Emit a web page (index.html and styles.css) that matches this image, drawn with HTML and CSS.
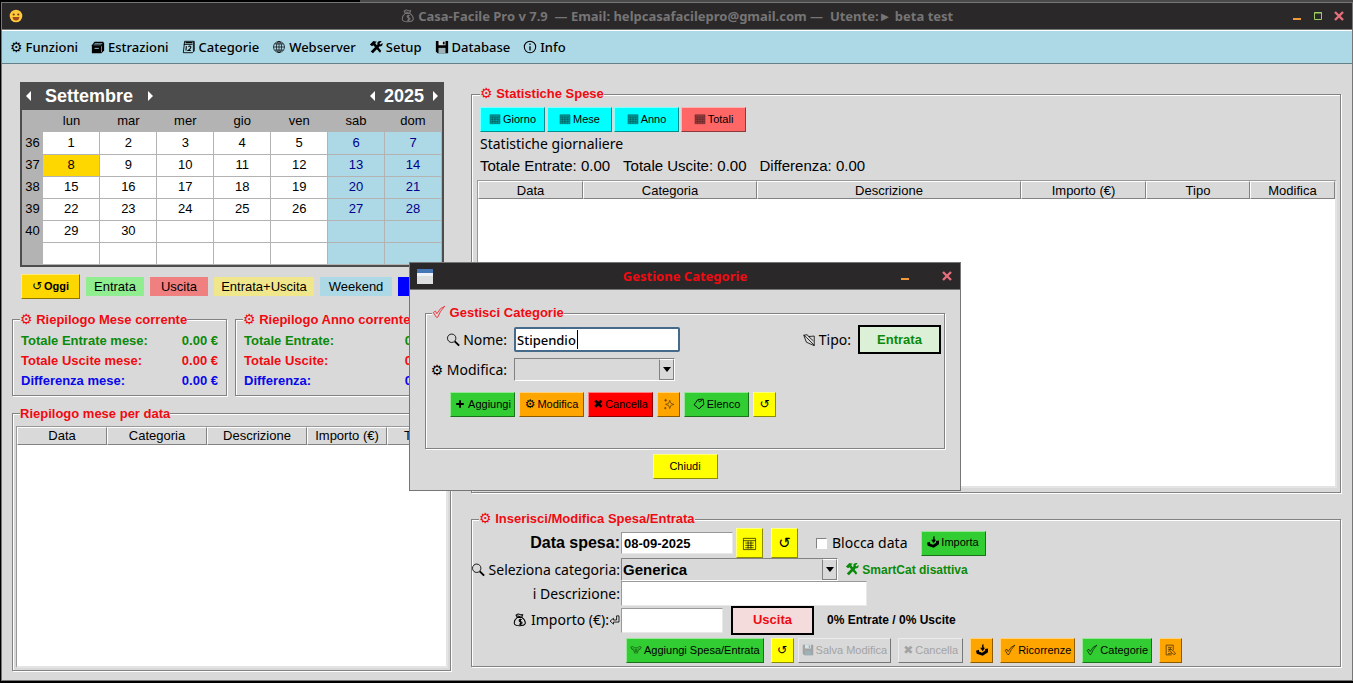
FILE: index.html
```html
<!DOCTYPE html>
<html lang="it">
<head>
<meta charset="utf-8">
<title>Casa-Facile Pro</title>
<link rel="stylesheet" href="styles.css">
</head>
<body>
<svg class="sprite" aria-hidden="true">
  <symbol id="cardbox" viewBox="0 0 16 16"><path d="M1 6l3-4h10l1 2v8l-3 3H1z" fill="currentColor"/><path d="M4 4h9M3 5.500h9M12 7v7" stroke="#add8e6" stroke-width=".7"/><path d="M4 9h5v1H4z" fill="#add8e6"/></symbol>
  <symbol id="cal12" viewBox="0 0 16 16"><path d="M3 1.500h11v11l-2 2H1.500z M13 2v11M2 5h10" fill="none" stroke="currentColor"/><path d="M5 7L4.500 12M7.500 8q1.500-2 2.500-.5T7 12h3M4 3h8" fill="none" stroke="currentColor" stroke-width="1.200"/></symbol>
  <symbol id="globe" viewBox="0 0 16 16"><g fill="none" stroke="currentColor" stroke-width=".8"><circle cx="8" cy="8" r="6.300"/><ellipse cx="8" cy="8" rx="3" ry="6.300"/><path d="M8 1.700v12.600M1.700 8h12.600M3 4.500h10M3 11.500h10"/></g></symbol>
  <symbol id="tools" viewBox="0 0 16 16"><path d="M1 5l4-4 4 1-2 1.500 7 9-1.500 2L5 6 3.500 7z" fill="currentColor"/><path d="M11 1.500q3-.5 3.500 0L12 4l1 1 2.500-1.500q.5 4-3.500 4L4.500 15 2 13l7.500-7.500q-.5-3 1.500-4z" fill="currentColor"/></symbol>
  <symbol id="floppy" viewBox="0 0 16 16"><path d="M1 1h14v14H3l-2-2z" fill="currentColor"/><path d="M4 1h8v5H4z" fill="#d4e3e8"/><path d="M4 9h8v6H4z" fill="#9db2b8"/><path d="M9 2h2v3H9z" fill="currentColor"/></symbol>
  <symbol id="info" viewBox="0 0 16 16"><circle cx="8" cy="8" r="6.500" fill="none" stroke="currentColor" stroke-width="1.200"/><path d="M8 7v5M8 4v1.600" stroke="currentColor" stroke-width="1.500"/></symbol>
  <symbol id="bag" viewBox="0 0 16 16"><g fill="none" stroke="currentColor" stroke-width="1.200"><path d="M5 5q-4 3-3.500 7 .5 2.500 6 2.500T14 12q.5-4-4-7zM5 5L3.500 2.500Q6 .5 7.500 1.500T11 2L10 5M5 3l5 2"/><path d="M10 7.500q-3-.5-3 1t2 1.500 1 2-3 .5M8.500 6.500v7"/></g></symbol>
  <symbol id="grid" viewBox="0 0 16 16"><path d="M1 2h14v12.500H1z" fill="currentColor" opacity=".4"/><path d="M1.500 2.500h13v12h-13zM2 5.500h12M2 8.500h12M2 11.500h12M4.500 5v9M8 5v9M11.500 5v9" fill="none" stroke="currentColor" stroke-width=".8" opacity=".35"/></symbol>
  <symbol id="calendar" viewBox="0 0 16 16"><path d="M1.500 2.500h13v12h-13zM1.500 5h13M3.500 7.500h9M3.500 10h9M3.500 12.500h9M6.500 5.500v8M9.500 5.500v8" fill="none" stroke="currentColor" opacity=".7"/></symbol>
  <symbol id="check" viewBox="0 0 16 16"><path d="M1.500 8.500l2.500-1.500 1.500 3Q9 3 14.500 1.500 9 7 6.500 14H5z" fill="none" stroke="currentColor" opacity=".85"/></symbol>
  <symbol id="search" viewBox="0 0 16 16"><circle cx="6.500" cy="6" r="4.800" fill="none" stroke="currentColor"/><path d="M10 9.500l5 5" stroke="currentColor" stroke-width="2.200"/></symbol>
  <symbol id="folder" viewBox="0 0 16 16"><path d="M2 2.500L6 2l1.500 2L14 3.500v11L5 10.500zM2 2.500L5 5l9 9M7.500 4L13 9" fill="none" stroke="currentColor" stroke-width=".9"/></symbol>
  <symbol id="plus" viewBox="0 0 16 16"><path d="M8 3v10M3 8h10" stroke="currentColor" stroke-width="2.600"/></symbol>
  <symbol id="spark" viewBox="0 0 16 16"><path d="M9 3l1.500 4 4 1.500-4 1.500L9 14l-1.500-4-4-1.500 4-1.500zM3.500 1v4M1.500 3h4M3 12v3M1.500 13.500h3" fill="none" stroke="currentColor" stroke-width=".9" opacity=".65"/></symbol>
  <symbol id="clip" viewBox="0 0 16 16"><path d="M6.500 2l7-.5 1 7L8 14.500 1.500 9zM7 3.500l2 1.500 3-2M9 13l5-4" fill="none" stroke="currentColor" stroke-width="1.200"/></symbol>
  <symbol id="inbox" viewBox="0 0 16 16"><path d="M0 9l4-1.500V10l4 1.500L12 9V6.500l4-.5v5l-7 4.500L1 13z" fill="currentColor"/><path d="M10 0Q7 1 8.500 5H5.500L9 9.500 12 5H10.500Q9.500 2 10 0z" fill="currentColor"/></symbol>
  <symbol id="memo" viewBox="0 0 16 16"><path d="M11 8V1.500H1.500v13H9M4 4.500h5M4 7h4M4 9.500h2M7 6l7 6-1 2-3-1-4-5zM9 12l-5 1" fill="none" stroke="currentColor" opacity=".7"/></symbol>
  <symbol id="wings" viewBox="0 0 16 16"><path d="M1 4q3-2 5 1h4q3-3 5-1-1 4-4 4l-1 4H6L5 8Q2 8 1 4zM3 5l2 2M13 5l-2 2M7 7h2v3H7z" fill="none" stroke="currentColor" stroke-width=".9" opacity=".6"/></symbol>
  <symbol id="enter" viewBox="0 0 16 16"><path d="M11 2h3.500v9H6.500v3L1.500 9.500l5-4V8H11z" fill="none" stroke="currentColor" stroke-width="1.200"/></symbol>
  <symbol id="left" viewBox="0 0 10 10"><path d="M7 0v10L2 5z" fill="currentColor"/></symbol>
  <symbol id="right" viewBox="0 0 10 10"><path d="M3 0v10l5-5z" fill="currentColor"/></symbol>
  <symbol id="min" viewBox="0 0 12 12"><path d="M2 8h8v2H2z" fill="#f09a3c"/></symbol>
  <symbol id="max" viewBox="0 0 12 12"><path d="M2.500 2.500h7v7h-7zM2 3h8" fill="none" stroke="#9bd060"/></symbol>
  <symbol id="close" viewBox="0 0 12 12"><path d="M2 2l8 8M10 2l-8 8" stroke="#e86f7d" stroke-width="2.400"/></symbol>
</svg>

<div class="window">
  <header class="titlebar">
    <svg class="smile" viewBox="0 0 14 14"><circle cx="7" cy="7" r="6.300" fill="#ffc83d"/><circle cx="4.700" cy="5.500" r="1.100" fill="#6b3c12"/><circle cx="9.300" cy="5.500" r="1.100" fill="#6b3c12"/><path d="M3.500 8h7q-.5 3.500-3.500 3.500T3.500 8z" fill="#a04a18"/></svg>
    <h1 class="title"><svg class="icon"><use href="#bag"/></svg> Casa-Facile Pro v 7.9 &nbsp;— Email: helpcasafacilepro@gmail.com — &nbsp;Utente:► beta test</h1>
    <div class="controls">
      <button aria-label="Riduci"><svg><use href="#min"/></svg></button>
      <button aria-label="Ingrandisci"><svg><use href="#max"/></svg></button>
      <button aria-label="Chiudi finestra"><svg><use href="#close"/></svg></button>
    </div>
  </header>
  <nav class="menubar">
    <button><span class="glyph" aria-hidden="true">⚙</span>Funzioni</button>
    <button><svg class="icon"><use href="#cardbox"/></svg>Estrazioni</button>
    <button><svg class="icon"><use href="#cal12"/></svg>Categorie</button>
    <button><svg class="icon"><use href="#globe"/></svg>Webserver</button>
    <button><svg class="icon"><use href="#tools"/></svg>Setup</button>
    <button><svg class="icon"><use href="#floppy"/></svg>Database</button>
    <button><svg class="icon"><use href="#info"/></svg>Info</button>
  </nav>

  <main class="content">
    <section class="side">
      <div class="calendar">
        <div class="cal-head">
          <button aria-label="Mese precedente"><svg><use href="#left"/></svg></button>
          <strong>Settembre</strong>
          <button aria-label="Mese successivo"><svg><use href="#right"/></svg></button>
          <span class="spacer"></span>
          <button aria-label="Anno precedente"><svg><use href="#left"/></svg></button>
          <strong>2025</strong>
          <button aria-label="Anno successivo"><svg><use href="#right"/></svg></button>
        </div>
        <table class="days">
          <colgroup><col class="week"></colgroup>
          <thead><tr><th></th><th>lun</th><th>mar</th><th>mer</th><th>gio</th><th>ven</th><th>sab</th><th>dom</th></tr></thead>
          <tbody>
            <tr><th>36</th><td>1</td><td>2</td><td>3</td><td>4</td><td>5</td><td>6</td><td>7</td></tr>
            <tr><th>37</th><td class="today">8</td><td>9</td><td>10</td><td>11</td><td>12</td><td>13</td><td>14</td></tr>
            <tr><th>38</th><td>15</td><td>16</td><td>17</td><td>18</td><td>19</td><td>20</td><td>21</td></tr>
            <tr><th>39</th><td>22</td><td>23</td><td>24</td><td>25</td><td>26</td><td>27</td><td>28</td></tr>
            <tr><th>40</th><td>29</td><td>30</td><td></td><td></td><td></td><td></td><td></td></tr>
            <tr><th></th><td></td><td></td><td></td><td></td><td></td><td></td><td></td></tr>
          </tbody>
        </table>
      </div>

      <div class="keys">
        <button class="btn gold"><span class="glyph" aria-hidden="true">↺</span>Oggi</button>
        <span class="key income">Entrata</span>
        <span class="key expense">Uscita</span>
        <span class="key both">Entrata+Uscita</span>
        <span class="key weekend">Weekend</span>
        <span class="key chosen"></span>
      </div>

      <div class="summaries">
        <fieldset class="group">
          <legend><span class="glyph" aria-hidden="true">⚙</span> Riepilogo Mese corrente</legend>
          <dl class="totals">
            <div class="green"><dt>Totale Entrate mese:</dt><dd>0.00 €</dd></div>
            <div class="red"><dt>Totale Uscite mese:</dt><dd>0.00 €</dd></div>
            <div class="blue"><dt>Differenza mese:</dt><dd>0.00 €</dd></div>
          </dl>
        </fieldset>
        <fieldset class="group">
          <legend><span class="glyph" aria-hidden="true">⚙</span> Riepilogo Anno corrente</legend>
          <dl class="totals">
            <div class="green"><dt>Totale Entrate:</dt><dd>0.00 €</dd></div>
            <div class="red"><dt>Totale Uscite:</dt><dd>0.00 €</dd></div>
            <div class="blue"><dt>Differenza:</dt><dd>0.00 €</dd></div>
          </dl>
        </fieldset>
      </div>

      <fieldset class="group list-group">
        <legend>Riepilogo mese per data</legend>
        <div class="sheet">
          <table class="list month-list">
            <colgroup><col><col><col><col><col></colgroup>
            <thead><tr><th>Data</th><th>Categoria</th><th>Descrizione</th><th>Importo (€)</th><th>Tipo</th></tr></thead>
          </table>
        </div>
      </fieldset>
    </section>

    <section class="work">
      <fieldset class="group stats">
        <legend><span class="glyph" aria-hidden="true">⚙</span> Statistiche Spese</legend>
        <div class="ranges">
          <button class="btn wide cyan"><svg class="icon"><use href="#grid"/></svg>Giorno</button>
          <button class="btn wide cyan"><svg class="icon"><use href="#grid"/></svg>Mese</button>
          <button class="btn wide cyan"><svg class="icon"><use href="#grid"/></svg>Anno</button>
          <button class="btn wide coral"><svg class="icon"><use href="#grid"/></svg>Totali</button>
        </div>
        <p class="stats-name">Statistiche giornaliere</p>
        <p class="stats-sums"><span>Totale Entrate: 0.00</span><span>Totale Uscite: 0.00</span><span>Differenza: 0.00</span></p>
        <div class="sheet">
          <table class="list stats-list">
            <colgroup><col><col><col><col><col><col></colgroup>
            <thead><tr><th>Data</th><th>Categoria</th><th>Descrizione</th><th>Importo (€)</th><th>Tipo</th><th>Modifica</th></tr></thead>
          </table>
        </div>
      </fieldset>

      <fieldset class="group entry">
        <legend><span class="glyph" aria-hidden="true">⚙</span> Inserisci/Modifica Spesa/Entrata</legend>
        <div class="form">
          <label class="big" for="date">Data spesa:</label>
          <div class="line date-line">
            <input id="date" class="field date" value="08-09-2025">
            <button class="btn square yellow" aria-label="Calendario"><svg class="icon"><use href="#calendar"/></svg></button>
            <button class="btn square yellow" aria-label="Ripristina data"><span class="glyph" aria-hidden="true">↺</span></button>
            <label class="lock"><input type="checkbox" class="tick"> Blocca data</label>
            <button class="btn wide lime"><svg class="icon"><use href="#inbox"/></svg>Importa</button>
          </div>
          <label for="cat"><svg class="icon"><use href="#search"/></svg> Seleziona categoria:</label>
          <div class="line">
            <span class="combo cat"><select id="cat"><option>Generica</option></select></span>
            <span class="smart"><svg class="icon"><use href="#tools"/></svg> SmartCat disattiva</span>
          </div>
          <label for="desc">i Descrizione:</label>
          <div class="line"><input id="desc" class="field desc"></div>
          <label for="amount"><svg class="icon"><use href="#bag"/></svg> Importo (€):<svg class="icon enter"><use href="#enter"/></svg></label>
          <div class="line amount-line">
            <input id="amount" class="field amount">
            <button class="kind out">Uscita</button>
            <span class="share">0% Entrate / 0% Uscite</span>
          </div>
        </div>
        <div class="actions">
          <button class="btn lime"><svg class="icon"><use href="#wings"/></svg>Aggiungi Spesa/Entrata</button>
          <div class="pair">
            <button class="btn mini yellow" aria-label="Azzera"><span class="glyph" aria-hidden="true">↺</span></button>
            <button class="btn" disabled><svg class="icon"><use href="#floppy"/></svg>Salva Modifica</button>
          </div>
          <button class="btn wide" disabled><span class="glyph" aria-hidden="true">✖</span>Cancella</button>
          <button class="btn mini orange" aria-label="Scarica"><svg class="icon"><use href="#inbox"/></svg></button>
          <button class="btn orange"><svg class="icon"><use href="#check"/></svg>Ricorrenze</button>
          <button class="btn lime"><svg class="icon"><use href="#check"/></svg>Categorie</button>
          <button class="btn mini orange" aria-label="Note"><svg class="icon"><use href="#memo"/></svg></button>
        </div>
      </fieldset>
    </section>
  </main>
</div>

<div class="dialog" role="dialog" aria-labelledby="dialog-title">
  <header class="titlebar">
    <svg class="app" viewBox="0 0 16 15"><path d="M0 0h16v15H0z" fill="#dcdedf"/><path d="M0 0h16v4H0z" fill="#4577b5"/><path d="M0 4h16v3H0z" fill="#eef2f6"/></svg>
    <h2 id="dialog-title" class="title alert">Gestione Categorie</h2>
    <div class="controls">
      <button aria-label="Riduci"><svg><use href="#min"/></svg></button>
      <button aria-label="Chiudi dialogo"><svg><use href="#close"/></svg></button>
    </div>
  </header>
  <div class="dialog-body">
    <fieldset class="group">
      <legend><svg class="icon"><use href="#check"/></svg> Gestisci Categorie</legend>
      <div class="dialog-form">
        <label for="name"><svg class="icon"><use href="#search"/></svg> Nome:</label>
        <span class="name-box"><input id="name" value="Stipendio"><i class="caret"></i></span>
        <span class="type"><svg class="icon"><use href="#folder"/></svg> Tipo: <button class="kind in">Entrata</button></span>
        <label for="edit"><span class="glyph" aria-hidden="true">⚙</span> Modifica:</label>
        <span class="combo edit"><select id="edit"><option></option></select></span>
      </div>
      <div class="dialog-actions">
        <button class="btn wide lime"><svg class="icon"><use href="#plus"/></svg>Aggiungi</button>
        <button class="btn wide orange"><span class="glyph" aria-hidden="true">⚙</span>Modifica</button>
        <button class="btn wide pure"><span class="glyph" aria-hidden="true">✖</span>Cancella</button>
        <button class="btn mini orange" aria-label="Pulisci"><svg class="icon"><use href="#spark"/></svg></button>
        <button class="btn wide lime"><svg class="icon"><use href="#clip"/></svg>Elenco</button>
        <button class="btn mini yellow" aria-label="Aggiorna"><span class="glyph" aria-hidden="true">↺</span></button>
      </div>
    </fieldset>
    <button class="btn wide yellow">Chiudi</button>
  </div>
</div>
</body>
</html>
```
FILE: styles.css
```css
* { box-sizing: border-box; }

body {
  margin: 0;
  height: 100vh;
  padding: 2px 0 2px 1px;
  background: linear-gradient(90deg, #000 360px, #4a4a4a 360px) top / 100% 2px no-repeat, #000;
  font: 13px/18px "Liberation Sans", Arial, sans-serif;
  color: #000;
  overflow: hidden;
}

button, input, select { font: inherit; color: inherit; margin: 0; }
button { padding: 0; border: 0; background: none; white-space: nowrap; }
h1, h2, p, dl, dd { margin: 0; }
.sprite { position: absolute; width: 0; height: 0; }
.icon { width: 14px; height: 14px; flex: none; vertical-align: -2px; }
.glyph { font: 14px/14px "DejaVu Sans", sans-serif; }
.spacer { flex: 1; }

.window {
  height: 100%;
  display: flex;
  flex-direction: column;
  border: 1px solid #767676;
  background: #d9d9d9;
}

.titlebar {
  height: 27px;
  flex: none;
  display: grid;
  grid-template-columns: 1fr auto 1fr;
  align-items: center;
  padding: 0 7px;
  background: #2a2829;
  border-bottom: 1px solid #767676;
}
.smile { width: 14px; height: 14px; }
.app { width: 16px; height: 15px; }
.title { font: bold 13px/20px "Noto Sans", sans-serif; color: #767575; white-space: nowrap; }
.alert { color: #f00a12; }
.controls { display: flex; gap: 9px; justify-self: end; }
.controls button, .controls svg { display: block; width: 12px; height: 12px; }
.dialog .controls { gap: 30px; }

.menubar {
  height: 34px;
  flex: none;
  display: flex;
  align-items: center;
  gap: 13px;
  padding: 0 8px;
  background: #add8e6;
  border-top: 1px solid #fff;
  border-bottom: 1px solid #647f88;
  font: 500 13px/18px "Noto Sans", sans-serif;
}
.menubar button { display: flex; align-items: center; gap: 3px; }

.content { flex: 1; min-height: 0; display: flex; gap: 20px; padding: 18px 11px 9px 10px; }
.side { width: 439px; flex: none; display: flex; flex-direction: column; }
.work { flex: 1; min-width: 0; display: flex; flex-direction: column; padding-top: 3px; padding-bottom: 4px; }

.calendar { margin: 0 7px 0 8px; border: 2px solid #4d4d4d; background: #b3b3b3; }
.cal-head { display: flex; align-items: center; height: 26px; padding: 0 2px 2px; background: #4d4d4d; color: #fff; font-size: 18px; }
.cal-head button, .cal-head svg { display: block; width: 10px; height: 10px; }
.cal-head strong { margin: 0 12px 0 11px; }
.cal-head strong:last-of-type { margin: 0 6px; }
.days { width: 100%; table-layout: fixed; border-collapse: collapse; text-align: center; }
.week { width: 21px; }
.days th, .days td { height: 22px; padding: 0; font-weight: normal; }
.days td { background: #fff; border: solid #b3b3b3; border-width: 0 1px 1px 0; }
.days td:nth-child(n+7) { background: #add8e6; color: #00008b; }
.days .today { background: gold; }

.keys { display: flex; align-items: center; gap: 6px; margin: 7px 0 0 9px; height: 26px; }
.key { height: 19px; padding: 1px 0; text-align: center; width: 58px; flex: none; }
.income { background: #90ee90; }
.expense { background: #f08080; }
.both { background: #f0e68c; width: 100px; }
.weekend { background: #add8e6; width: 72px; }
.chosen { background: #00f; width: 40px; }

.btn {
  height: 25px;
  flex: none;
  display: flex;
  align-items: center;
  justify-content: center;
  gap: 2px;
  padding: 0 3px 2px;
  font-size: 11px;
  line-height: 14px;
  background: #d9d9d9;
  border: 1px solid;
  border-color: rgba(255, 255, 255, .5) rgba(0, 0, 0, .45) rgba(0, 0, 0, .45) rgba(255, 255, 255, .5);
}
.btn .icon { width: 12px; height: 12px; }
.btn .glyph { font-size: 12px; }
.btn:disabled { color: #a3a3a3; }
.wide { width: 65px; padding: 0 0 2px; }
.mini { width: 23px; padding: 0 0 2px; }
.square { width: 27px; height: 30px; padding: 0; }
.square .icon { width: 15px; height: 15px; }
.square .glyph { font-size: 15px; }
.gold { background: gold; font-weight: bold; width: 59px; }
.cyan { background: cyan; }
.coral { background: #ff6666; }
.yellow { background: #ff0; }
.lime { background: #32cd32; }
.orange { background: orange; }
.pure { background: red; }

.group {
  min-width: 0;
  margin: 0;
  padding: 0 4px;
  border: 1px solid #828282;
  box-shadow: inset 1px 1px 0 #fff, 1px 1px 0 #fff;
}
.group > legend { margin-left: 3px; padding: 0; background: #d9d9d9; color: #f00a12; font-weight: bold; white-space: nowrap; }

.summaries { display: flex; gap: 8px; margin-top: 11px; }
.summaries .group { width: 215px; flex: none; padding: 2px 8px 4px 8px; }
.summaries .group > legend { margin-left: -1px; }
.totals { font-weight: bold; line-height: 20px; }
.totals div { display: flex; justify-content: space-between; }
.green { color: #0a8a0a; }
.red { color: #f00a12; }
.blue { color: #0808ea; }

.list-group { flex: 1; display: flex; flex-direction: column; margin-top: 9px; padding: 3px 2px 2px 3px; }
.list-group > legend { margin-left: 4px; }
.sheet { flex: 1; background: #fff; border: solid; border-width: 1px 2px 2px 1px; border-color: #999 #e4e4e4 #e4e4e4 #999; }
.list { width: 100%; table-layout: fixed; border-collapse: separate; border-spacing: 0; }
.list th { height: 18px; padding: 0; font-weight: normal; line-height: 15px; background: #d9d9d9; border: 1px solid; border-color: #fff #828282 #828282 #fff; }
.month-list col:nth-child(1) { width: 90px; }
.month-list col:nth-child(2), .month-list col:nth-child(3) { width: 100px; }
.month-list col:nth-child(4) { width: 80px; }

.stats { flex: 1; display: flex; flex-direction: column; padding: 4px 3px 4px 5px; }
.ranges { display: flex; gap: 2px; padding-left: 3px; }
.stats-name { padding-left: 3px; margin-top: 3px; font: 14px/18px "Noto Sans", sans-serif; }
.stats-sums { display: flex; gap: 13px; padding-left: 3px; margin: 4px 0 5px; font-size: 15px; line-height: 18px; }
.stats-list col:nth-child(1) { width: 105px; }
.stats-list col:nth-child(2) { width: 174px; }
.stats-list col:nth-child(4) { width: 125px; }
.stats-list col:nth-child(5) { width: 104px; }
.stats-list col:nth-child(6) { width: 85px; }

.entry { margin-top: 17px; padding: 0 2px 3px 2px; }
.entry > legend { margin-left: 5px; }
.form { display: grid; grid-template-columns: 146px 1fr; grid-template-rows: 30px 23px 25px 28px; column-gap: 1px; align-items: center; }
.form > label { justify-self: end; white-space: nowrap; font: 14px/18px "Noto Sans", sans-serif; }
.form > .big { font: bold 16px/20px "Liberation Sans", Arial, sans-serif; }
.form .enter { width: 11px; }
.line { display: flex; align-items: center; }
.field { height: 25px; padding: 0 2px; background: #fff; border: solid; border-width: 1px; border-color: #999 #e8e8e8 #e8e8e8 #999; outline: 0; }
.date { width: 112px; height: 22px; font-weight: bold; margin-right: 3px; }
.date-line .square { margin-right: 8px; }
.lock { display: flex; align-items: center; gap: 5px; margin: 0 13px 0 10px; font: 14px/18px "Noto Sans", sans-serif; }
.tick { appearance: none; width: 11px; height: 11px; background: #fff; border: 1px solid; border-color: #828282 #fff #fff #828282; }
.desc { width: 246px; }
.amount { width: 102px; margin-right: 8px; }
.share, .smart { font-weight: bold; font-size: 12px; }
.share { margin-left: 13px; }
.smart { margin-left: 7px; color: #0a8a0a; }

.combo { display: block; position: relative; height: 23px; border: 1px solid; border-color: #828282 #fff #fff #828282; }
.combo select { display: block; width: 100%; height: 100%; padding: 0 1px; border: 0; appearance: none; background: #d9d9d9; outline: 0; }
.combo::before { content: ""; position: absolute; right: 0; top: 0; bottom: 0; width: 13px; border: 1px solid; border-color: #fff #828282 #828282 #828282; pointer-events: none; }
.combo::after { content: ""; position: absolute; right: 3px; top: 8px; border: solid transparent; border-width: 5px 4px 0; border-top-color: #000; pointer-events: none; }
.cat { width: 217px; }
.cat select { font-weight: bold; font-size: 15px; }
.edit { width: 161px; }

.kind { width: 83px; height: 29px; border: 2px solid #000; font-weight: bold; }
.out { background: #f5dcdc; color: #f00a12; }
.in { background: #dcf0d8; color: #0a8a0a; }
.actions { display: flex; gap: 7px; margin: 4px 0 0 152px; }
.pair { display: flex; gap: 4px; }

.dialog {
  position: absolute;
  left: 409px;
  top: 262px;
  width: 552px;
  background: #d9d9d9;
  border: 1px solid #767676;
}
.dialog-body { display: flex; flex-direction: column; align-items: center; gap: 5px; padding: 14px 15px 11px; }
.dialog-body .group { width: 100%; padding: 3px 3px 31px 6px; }
.dialog-body .group > legend { margin-left: 0; }
.dialog-form { display: grid; grid-template-columns: 75px 1fr auto; column-gap: 7px; row-gap: 4px; align-items: center; font: 14px/18px "Noto Sans", sans-serif; }
.dialog-form label { justify-self: end; white-space: nowrap; }
.name-box { position: relative; width: 166px; }
.name-box input { display: block; width: 100%; height: 25px; padding: 0 1px; background: #fff; border: 2px solid #456a8a; border-radius: 2px; outline: 0; font: 500 13px/18px "Noto Sans", sans-serif; }
.caret { position: absolute; left: 63px; top: 3px; width: 1px; height: 19px; background: #000; }
.type { display: flex; align-items: center; gap: 3px; }
.type .kind { margin-left: 4px; font: bold 13px/18px "Liberation Sans", Arial, sans-serif; }
.dialog-actions { display: flex; gap: 4px; margin: 11px 0 0 18px; }
```
